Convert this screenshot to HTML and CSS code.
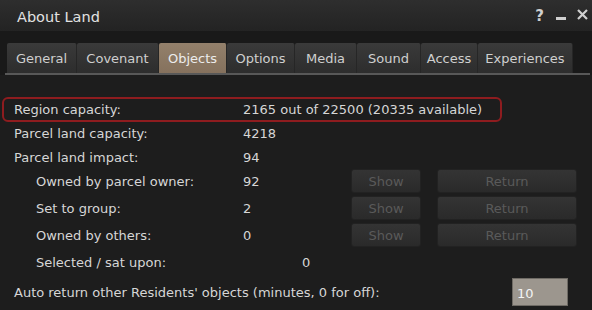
FILE: index.html
```html
<!DOCTYPE html>
<html lang="en">
<head>
  <meta charset="UTF-8" />
  <title>About Land</title>
  <link rel="stylesheet" href="styles.css">
</head>
<body>
  <div class="window">
    <div class="titlebar">
      <span class="title">About Land</span>
      <div class="controls">
        <span class="help">?</span>
        <svg class="ctl" width="11" height="16" viewBox="0 0 11 16"><rect x="0" y="9" width="10" height="3" fill="#cfcfcf"/></svg>
        <svg class="ctl" width="11" height="16" viewBox="0 0 11 16"><path d="M1 2 L10 11 M10 2 L1 11" stroke="#cfcfcf" stroke-width="2.2"/></svg>
      </div>
    </div>

    <div class="tabbar">
      <div class="tabs">
        <div class="tab w-general">General</div>
        <div class="tab w-covenant">Covenant</div>
        <div class="tab active w-objects">Objects</div>
        <div class="tab w-options">Options</div>
        <div class="tab w-media">Media</div>
        <div class="tab w-sound">Sound</div>
        <div class="tab w-access">Access</div>
        <div class="tab w-exp">Experiences</div>
      </div>
      <div class="tabline"></div>
    </div>

    <div class="panel">
      <div class="row highlight">
        <span class="label">Region capacity:</span>
        <span class="value wide">2165 out of 22500 (20335 available)</span>
      </div>
      <div class="row r-cap">
        <span class="label">Parcel land capacity:</span>
        <span class="value">4218</span>
      </div>
      <div class="row">
        <span class="label">Parcel land impact:</span>
        <span class="value">94</span>
      </div>
      <div class="row sub">
        <span class="label">Owned by parcel owner:</span>
        <span class="value">92</span>
        <button class="btn show" disabled>Show</button>
        <button class="btn ret" disabled>Return</button>
      </div>
      <div class="row sub spaced">
        <span class="label">Set to group:</span>
        <span class="value">2</span>
        <button class="btn show" disabled>Show</button>
        <button class="btn ret" disabled>Return</button>
      </div>
      <div class="row sub spaced">
        <span class="label">Owned by others:</span>
        <span class="value">0</span>
        <button class="btn show" disabled>Show</button>
        <button class="btn ret" disabled>Return</button>
      </div>
      <div class="row sub spaced">
        <span class="label">Selected / sat upon:</span>
        <span class="value shifted">0</span>
      </div>
      <div class="autoreturn">
        <span>Auto return other Residents' objects (minutes, 0 for off):</span>
        <input class="minutes" type="text" value="10" />
      </div>
    </div>
  </div>
</body>
</html>
```

FILE: styles.css
```css
html, body {
  margin: 0;
  padding: 0;
  background-color: #1d1d1d;
}
.window {
  width: 592px;
  height: 310px;
  overflow: hidden;
  background-color: #1d1d1d;
  font-family: "DejaVu Sans", sans-serif;
  font-size: 13px;
  color: #d6d6d6;
}
.titlebar {
  height: 31px;
  display: flex;
  align-items: center;
  justify-content: space-between;
  padding: 0 4px 0 17px;
  background: linear-gradient(#2e2e2e, #232323);
}
.title {
  font-size: 14.5px;
  color: #e2e2e2;
  padding-top: 2px;
}
.controls {
  display: flex;
  align-items: center;
  gap: 10px;
}
.help {
  font-weight: bold;
  font-size: 15px;
  color: #cfcfcf;
  margin-right: 2px;
}
.ctl {
  display: block;
}
.tabbar {
  background-color: #191919;
  padding-top: 12px;
}
.tabs {
  display: flex;
  height: 30px;
  margin-left: 7px;
}
.tab {
  display: flex;
  align-items: center;
  justify-content: center;
  color: #cfcfcf;
  background: linear-gradient(#3a3a3a, #2d2d2d);
  border-right: 1px solid #262626;
  border-radius: 2px 2px 0 0;
  box-sizing: border-box;
  padding-top: 1px;
}
.tab.active {
  background: linear-gradient(#93806b, #85715d);
  color: #ececec;
}
.w-general { width: 70px; }
.w-covenant { width: 82px; }
.w-objects { width: 68px; }
.w-options { width: 68px; }
.w-media { width: 62px; }
.w-sound { width: 64px; }
.w-access { width: 57px; }
.w-exp { width: 95px; }
.tabline {
  height: 2px;
  margin: 0 2px 0 5px;
  background-color: #585858;
}
.panel {
  padding-top: 22px;
}
.row {
  display: flex;
  align-items: center;
  height: 24px;
  padding-left: 14px;
}
.label {
  width: 229px;
  flex: none;
}
.value {
  width: 108px;
  flex: none;
}
.value.wide {
  width: auto;
  white-space: nowrap;
}
.value.shifted {
  padding-left: 59px;
}
.highlight {
  height: 25px;
  box-sizing: border-box;
  margin: 0 90px 0 2px;
  padding-left: 10px;
  border: 2px solid #8e1c1f;
  border-radius: 6px;
}
.r-cap {
  height: 23px;
}
.sub {
  padding-left: 36px;
}
.sub .label {
  width: 207px;
}
.spaced {
  margin-top: 3px;
}
.btn {
  height: 24px;
  box-sizing: border-box;
  font-family: "DejaVu Sans", sans-serif;
  font-size: 13px;
  color: #5a5a5a;
  background: linear-gradient(#343434, #2a2a2a);
  border: 1px solid #222;
  border-radius: 3px;
  padding: 0;
}
.btn.show {
  width: 70px;
}
.btn.ret {
  width: 140px;
  margin-left: 16px;
}
.autoreturn {
  display: flex;
  align-items: center;
  justify-content: space-between;
  height: 28px;
  margin-top: 4px;
  padding: 0 24px 0 14px;
}
.minutes {
  width: 56px;
  height: 28px;
  box-sizing: border-box;
  background-color: #9c968e;
  border: 1px solid #6f6b65;
  color: #f4f4f4;
  font-family: "DejaVu Sans", sans-serif;
  font-size: 13px;
  padding: 2px 4px 0;
}
```
